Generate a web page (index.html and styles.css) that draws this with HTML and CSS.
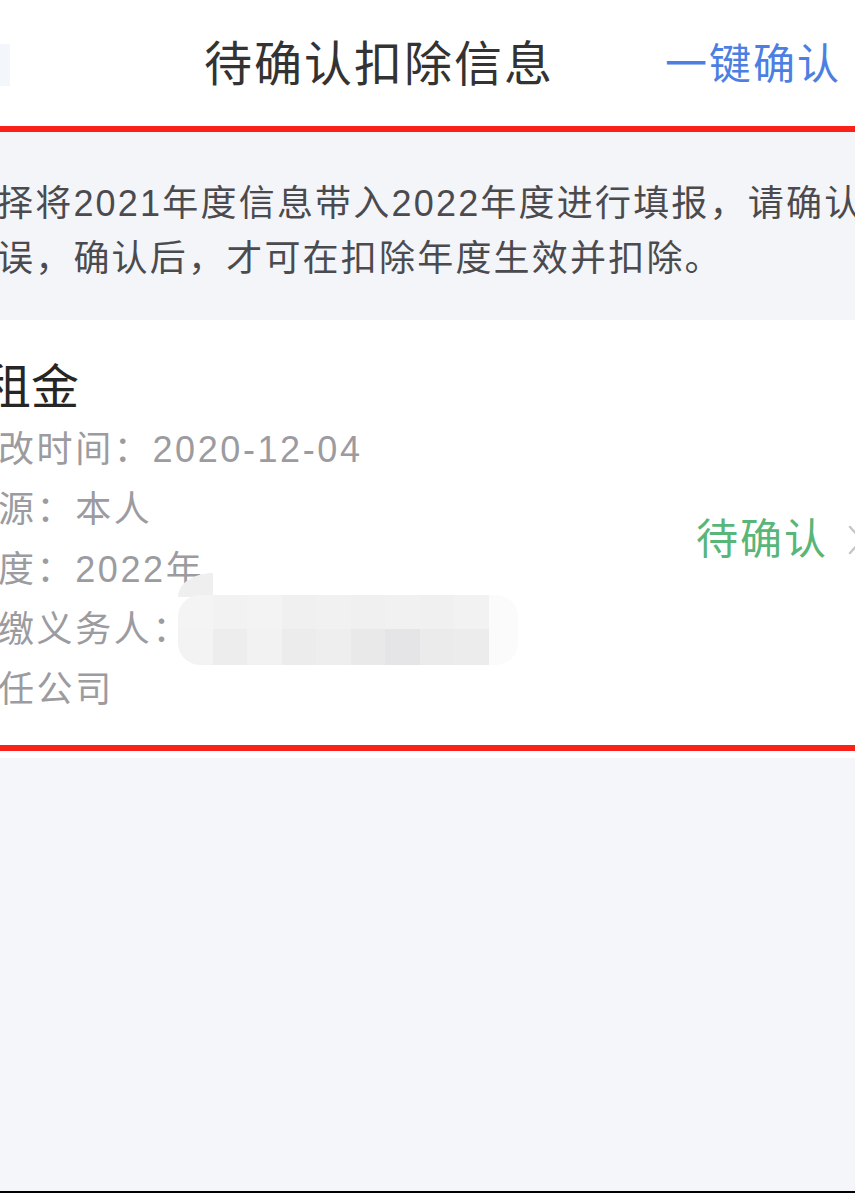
FILE: index.html
```html
<!DOCTYPE html>
<html lang="zh-CN">
<head>
<meta charset="utf-8">
<title>待确认扣除信息</title>
<link rel="stylesheet" href="styles.css">
</head>
<body>
<div class="screen">
  <header class="nav">
    <span class="back"></span>
    <h1 class="nav-title">待确认扣除信息</h1>
    <a class="nav-action">一键确认</a>
  </header>
  <div class="mark"></div>
  <section class="notice">
    <p class="notice-line">择将2021年度信息带入2022年度进行填报，请确认</p>
    <p class="notice-line">误，确认后，才可在扣除年度生效并扣除。</p>
  </section>
  <section class="card">
    <div class="card-main">
      <div class="card-title">租金</div>
      <div class="card-row">改时间：2020-12-04</div>
      <div class="card-row">源：本人</div>
      <div class="card-row">度：2022年</div>
      <div class="card-row">缴义务人：</div>
      <div class="card-row">任公司</div>
    </div>
    <div class="status">
      <span class="status-text">待确认</span>
      <svg class="chevron" width="16" height="30" viewBox="0 0 16 30"><polyline points="2,2 14,15 2,28" fill="none" stroke="#c6c6c8" stroke-width="2.4" stroke-linecap="round" stroke-linejoin="round"/></svg>
    </div>
    <svg class="mosaic" width="340" height="92" viewBox="0 0 340 92">
      <defs>
        <clipPath id="mc"><rect x="0" y="22" width="340" height="70" rx="22"/></clipPath>
      </defs>
      <path d="M0 24 C0 9 18 0 35 0 V24 Z" fill="#efeff0"/>
      <g clip-path="url(#mc)">
        <rect x="0" y="22" width="35" height="35" fill="#f4f4f5"/>
        <rect x="35" y="22" width="35" height="35" fill="#f2f2f3"/>
        <rect x="69" y="22" width="35" height="35" fill="#f3f3f4"/>
        <rect x="104" y="22" width="35" height="35" fill="#f0f0f1"/>
        <rect x="138" y="22" width="35" height="35" fill="#f1f1f2"/>
        <rect x="173" y="22" width="35" height="35" fill="#f0f0f1"/>
        <rect x="207" y="22" width="35" height="35" fill="#f1f1f2"/>
        <rect x="242" y="22" width="35" height="35" fill="#f0f0f1"/>
        <rect x="276" y="22" width="35" height="35" fill="#f2f2f3"/>
        <rect x="311" y="22" width="29" height="35" fill="#fbfbfb"/>
        <rect x="0" y="56" width="35" height="36" fill="#f3f3f4"/>
        <rect x="35" y="56" width="35" height="36" fill="#ededee"/>
        <rect x="69" y="56" width="35" height="36" fill="#f2f2f3"/>
        <rect x="104" y="56" width="35" height="36" fill="#ececed"/>
        <rect x="138" y="56" width="35" height="36" fill="#eeeeef"/>
        <rect x="173" y="56" width="35" height="36" fill="#e9e9ea"/>
        <rect x="207" y="56" width="35" height="36" fill="#e5e5e7"/>
        <rect x="242" y="56" width="35" height="36" fill="#ebebec"/>
        <rect x="276" y="56" width="35" height="36" fill="#ececed"/>
        <rect x="311" y="56" width="29" height="36" fill="#fbfbfb"/>
      </g>
    </svg>
  </section>
  <div class="mark"></div>
  <div class="gap"></div>
  <div class="filler"></div>
  <div class="bottom-bar"></div>
</div>
</body>
</html>
```

FILE: styles.css
```css
html, body {
  margin: 0;
  padding: 0;
}
body {
  width: 855px;
  height: 1193px;
  overflow: hidden;
  background: #f5f6fa;
  font-family: "Liberation Sans", "Noto Sans CJK SC", sans-serif;
}
.screen {
  display: flex;
  flex-direction: column;
  height: 1193px;
  overflow: hidden;
}
.nav {
  display: flex;
  align-items: center;
  height: 122px;
  padding-top: 4px;
  background: #ffffff;
}
.back {
  width: 10px;
  height: 42px;
  background: #f3f7fc;
  flex: none;
}
.nav-title {
  margin: 0 0 0 194px;
  font-size: 48px;
  font-weight: 400;
  letter-spacing: 2px;
  color: #333333;
  line-height: 60px;
  white-space: nowrap;
}
.nav-action {
  margin-left: auto;
  margin-right: 14px;
  font-size: 42px;
  letter-spacing: 2px;
  color: #4d7fe3;
  line-height: 60px;
  white-space: nowrap;
}
.mark {
  height: 6px;
  background: #fa2118;
  flex: none;
}
.notice {
  background: #f4f5f9;
  padding: 44px 0 34px;
  flex: none;
}
.notice-line {
  margin: 0 0 0 -3px;
  font-size: 36px;
  letter-spacing: 2.2px;
  line-height: 55px;
  color: #4b4b4f;
  white-space: nowrap;
}
.card {
  position: relative;
  display: flex;
  background: #ffffff;
  padding: 36px 0 25px;
  flex: none;
}
.card-main {
  display: flex;
  flex-direction: column;
}
.card-title {
  margin-left: -17px;
  font-size: 48px;
  line-height: 64px;
  color: #262626;
  white-space: nowrap;
}
.card-row {
  margin-left: -2px;
  font-size: 36px;
  letter-spacing: 2.6px;
  line-height: 60px;
  color: #9b9ba0;
  white-space: nowrap;
}
.status {
  display: flex;
  align-items: center;
  gap: 20px;
  margin-left: auto;
  margin-right: -9px;
  align-self: center;
  padding-top: 4px;
}
.status-text {
  font-size: 42px;
  letter-spacing: 2px;
  line-height: 56px;
  color: #58b679;
  white-space: nowrap;
}
.chevron {
  display: block;
  flex: none;
}
.mosaic {
  position: absolute;
  left: 178px;
  top: 253px;
}
.gap {
  height: 7px;
  background: #ffffff;
  flex: none;
}
.filler {
  flex: 1;
  background: #f5f6fa;
}
.bottom-bar {
  height: 2px;
  background: #000000;
  flex: none;
}
```
